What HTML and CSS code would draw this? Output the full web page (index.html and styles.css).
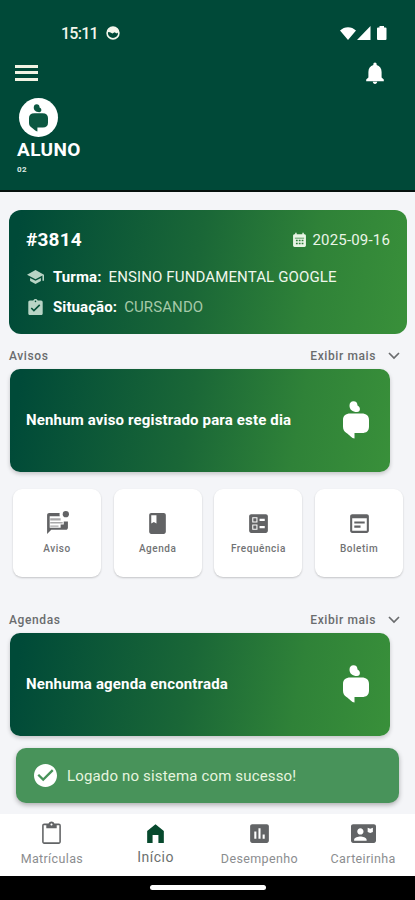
FILE: index.html
```html
<!DOCTYPE html>
<html lang="pt-BR">
<head>
<meta charset="utf-8">
<meta name="viewport" content="width=device-width, initial-scale=1">
<title>Aluno</title>
<link rel="stylesheet" href="styles.css">
</head>
<body>
<svg width="0" height="0" class="defs" aria-hidden="true">
  <symbol id="apple" viewBox="0 0 26 38">
    <path d="M10.500 .3c2.500 0 4 1.500 4 4.200 1.600.8 2.400 2 2.400 3.500 0 1.800-1 3-2.900 3-4.500 0-7.500-2.500-7.500-6.300C6.500 2 8 .3 10.500.3z"/>
    <path d="M7.500 12.500h11c5 0 7.500 2.300 7.500 6.500v6.500c0 4.500-2.500 6.500-7 6.500h-7.500v5.500C9 37.500 6.500 34 3.500 32 1 30.200 0 28.500 0 25.500V19c0-4.200 2.500-6.500 7.500-6.500z"/>
  </symbol>
  <symbol id="chevron" viewBox="0 0 12 8"><path d="M1 1l5 5 5-5" fill="none" stroke="currentColor" stroke-width="1.700"/></symbol>
</svg>
<div class="phone">
  <header class="header">
    <div class="status">
      <span class="time">15:11</span>
      <svg class="face" viewBox="0 0 14 14"><circle cx="7" cy="7" r="5.900" fill="none" stroke="currentColor" stroke-width="1.600"/><path d="M1.500 6C3-.5 11-.5 12.500 6L11 7.500 8.500 6.300 6.500 7.500 4 6.300z"/></svg>
      <svg class="signals" viewBox="0 0 47 15"><path d="M0 4.500C4.500 0 11.500 0 16 4.500L8 14zM30.500 0v14H17zM39.500 1.500V0h4.500v1.500h1.500q1 0 1 1V13q0 1-1 1h-7.500q-1 0-1-1V2.500q0-1 1-1z"/></svg>
    </div>
    <div class="toolbar">
      <div class="menu"><i></i><i></i><i></i></div>
      <svg class="bell" viewBox="4 2 16 20"><path d="M12 22c1.100 0 2-.9 2-2h-4c0 1.100.9 2 2 2zm6-6v-5c0-3.070-1.630-5.640-4.500-6.320V4c0-.83-.67-1.500-1.500-1.500s-1.500.67-1.500 1.500v.68C7.640 5.360 6 7.920 6 11v5l-2 2v1.500h16V18z"/></svg>
    </div>
    <div class="avatar"><svg><use href="#apple"/></svg></div>
    <h1 class="name">ALUNO</h1>
    <p class="code">02</p>
  </header>

  <main class="content">
    <section class="student">
      <div class="row top">
        <strong class="number">#3814</strong>
        <span class="date"><svg viewBox="3 1 18 21"><path fill-rule="evenodd" d="M19 4h-1V2h-2v2H8V2H6v2H5c-1.100 0-2 .9-2 2v14c0 1.100.9 2 2 2h14c1.100 0 2-.9 2-2V6c0-1.100-.9-2-2-2zM5.500 9h13v1h-13zM7 12h2.500v2H7zm4 0h2.500v2H11zm4 0h2.500v2H15zm-8 4h2.500v2H7zm4 0h2.500v2H11zm4 0h2.500v2H15z"/></svg><span>2025-09-16</span></span>
      </div>
      <div class="row detail">
        <svg viewBox="1 3 22 18"><path d="M5 13.180v4L12 21l7-3.820v-4L12 17l-7-3.820zM12 3L1 9l11 6 9-4.910V17h2V9L12 3z"/></svg>
        <b>Turma:</b><span class="class-name">ENSINO FUNDAMENTAL GOOGLE</span>
      </div>
      <div class="row detail">
        <svg viewBox="3 1 18 20"><path d="M19 3h-4.180C14.400 1.840 13.300 1 12 1s-2.400.84-2.820 2H5c-1.100 0-2 .9-2 2v14c0 1.100.9 2 2 2h14c1.100 0 2-.9 2-2V5c0-1.100-.9-2-2-2zm-7 0c.55 0 1 .45 1 1s-.45 1-1 1-1-.45-1-1 .45-1 1-1zm-2 14l-4-4 1.410-1.410L10 14.170l6.590-6.590L18 9l-8 8z"/></svg>
        <b>Situação:</b><span class="state">CURSANDO</span>
      </div>
    </section>

    <div class="section-head"><span>Avisos</span><span class="more"><span>Exibir mais</span><svg><use href="#chevron"/></svg></span></div>
    <section class="banner"><span>Nenhum aviso registrado para este dia</span><svg><use href="#apple"/></svg></section>

    <div class="tiles">
      <div class="tile"><svg viewBox="0 0 24 24"><path d="M22 6.980V16c0 1.100-.9 2-2 2H6l-4 4V4c0-1.100.9-2 2-2h10.100C13.800 3.500 14 4 14.200 5H4.500v11H15v-3h3v-3h4z"/><path d="M5 7h10v2H5zm0 3.500h12v1.500H5zM5 14h8v1H5z" opacity=".55"/><circle cx="20" cy="3" r="3"/></svg><span>Aviso</span></div>
      <div class="tile"><svg viewBox="0 0 24 24"><path d="M18 2H6c-1.100 0-2 .9-2 2v16c0 1.100.9 2 2 2h12c1.100 0 2-.9 2-2V4c0-1.100-.9-2-2-2zM6 4h5v8l-2.500-1.500L6 12V4z"/></svg><span>Agenda</span></div>
      <div class="tile"><svg viewBox="0 0 24 24"><path fill-rule="evenodd" d="M13 9.500h5v-2h-5v2zm0 7h5v-2h-5v2zm6 4.500H5c-1.100 0-2-.9-2-2V5c0-1.100.9-2 2-2h14c1.100 0 2 .9 2 2v14c0 1.100-.9 2-2 2zM6 11h5V6H6v5zm1-4h3v3H7V7zM6 18h5v-5H6v5zm1-4h3v3H7v-3z"/></svg><span>Frequência</span></div>
      <div class="tile"><svg viewBox="0 0 24 24"><path fill-rule="evenodd" d="M19 3H5c-1.110 0-2 .9-2 2v14c0 1.100.89 2 2 2h14c1.100 0 2-.9 2-2V5c0-1.100-.89-2-2-2zm0 16H5V7h14v12zm-2-7H7v-2h10v2zm-4 4H7v-2h6v2z"/></svg><span>Boletim</span></div>
    </div>

    <div class="section-head"><span>Agendas</span><span class="more"><span>Exibir mais</span><svg><use href="#chevron"/></svg></span></div>
    <section class="banner"><span>Nenhuma agenda encontrada</span><svg><use href="#apple"/></svg></section>

    <div class="toast"><svg viewBox="2 2 20 20"><path d="M12 2C6.480 2 2 6.480 2 12s4.480 10 10 10 10-4.480 10-10S17.520 2 12 2zm-2 15l-5-5 1.410-1.410L10 14.170l7.590-7.590L19 8l-9 9z"/></svg><span>Logado no sistema com sucesso!</span></div>
  </main>

  <nav class="nav">
    <a><svg viewBox="0 0 24 24"><path fill-rule="evenodd" d="M19 2.500h-4.180C14.400 1.340 13.300.5 12 .5s-2.400.84-2.820 2H5c-1.100 0-2 .9-2 2V20c0 1.100.9 2 2 2h14c1.100 0 2-.9 2-2V4.500c0-1.100-.9-2-2-2zm-7-.2c.55 0 1 .45 1 1s-.45 1-1 1-1-.45-1-1 .45-1 1-1zM19.500 20.500h-15V4H7v3h10V4h2.500z"/></svg><span>Matrículas</span></a>
    <a class="active"><svg viewBox="0 0 24 24"><path d="M4 21V9.500L12 3l8 6.500V21h-5.200v-7.500H9.200V21z"/></svg><span>Início</span></a>
    <a><svg viewBox="0 0 24 24"><path d="M19 3H5c-1.100 0-2 .9-2 2v14c0 1.100.9 2 2 2h14c1.100 0 2-.9 2-2V5c0-1.100-.9-2-2-2zM9 17H7v-7h2v7zm4 0h-2V7h2v10zm4 0h-2v-4h2v4z"/></svg><span>Desempenho</span></a>
    <a><svg class="wide" viewBox="0 3 24 18"><path fill-rule="evenodd" d="M22 3H2C.9 3 0 3.900 0 5v14c0 1.100.9 2 2 2h20c1.100 0 2-.9 2-2V5c0-1.100-.9-2-2-2zM9 7c1.660 0 3 1.340 3 3s-1.340 3-3 3-3-1.340-3-3 1.340-3 3-3zm6 12H3v-1c0-2 4-3.100 6-3.100s6 1.100 6 3.100v1zm1-12.500l2.500 1 2.500-1v4l-2.500 1-2.500-1z"/></svg><span>Carteirinha</span></a>
  </nav>
  <div class="system-bar"><i></i></div>
</div>
</body>
</html>
```
FILE: styles.css
```css
* { box-sizing: border-box; margin: 0; padding: 0; }
body { font-family: Roboto, sans-serif; background: #f4f5f8; white-space: nowrap; }
svg { fill: currentColor; flex: none; display: block; }
.defs { position: absolute; }
.phone { width: 415px; height: 900px; display: flex; flex-direction: column; overflow: hidden; }

.header { height: 192px; background: #004938; color: #fff; border-bottom: 2px solid #06110e; padding: 25px 17px 0; flex: none; }
.status { height: 16px; display: flex; align-items: center; padding-left: 44px; color: #f3f6ec; }
.time { font-size: 16px; font-weight: 500; letter-spacing: -.75px; }
.face { width: 14px; height: 14px; margin-left: 8px; }
.signals { width: 47px; height: 15px; margin-left: auto; margin-right: 11px; color: #fff; }
.toolbar { height: 21px; margin-top: 21px; display: flex; justify-content: space-between; align-items: center; }
.menu { width: 23px; margin-left: -2px; display: flex; flex-direction: column; gap: 3.500px; }
.menu i { height: 3px; background: #f1f3e3; }
.bell { width: 18px; height: 22px; margin-right: 14px; }
.avatar { width: 39px; height: 39px; margin: 15px 0 0 2px; border-radius: 50%; background: #fff; color: #0b5741; display: flex; align-items: center; justify-content: center; }
.avatar svg { width: 19px; height: 28px; }
.name { font-size: 19px; line-height: 22px; margin-top: 2px; letter-spacing: .4px; }
.code { font-size: 8px; line-height: 10px; margin-top: 4px; font-weight: 700; color: #dfe9e4; letter-spacing: .4px; }

.content { flex: 1; padding: 18px 9px 0; display: flex; flex-direction: column; min-height: 0; }
.student, .banner { background: linear-gradient(100deg, #004a38 3%, #1a6737 47%, #2f8238 75%, #39903a 100%); color: #fff; flex: none; }
.student { height: 124px; width: 398px; border-radius: 12px; padding: 16px 17px 0; }
.row { display: flex; align-items: center; }
.top { height: 27px; justify-content: space-between; }
.number { font-size: 19px; letter-spacing: .2px; }
.date { display: flex; align-items: center; gap: 6px; font-size: 15px; letter-spacing: .18px; color: #eaf5e6; }
.date svg { width: 13px; height: 15px; }
.detail { height: 30px; font-size: 15px; }
.detail:nth-child(2) { margin-top: 9px; }
.detail svg { width: 17px; height: 16px; margin: 0 9px 0 1px; color: #b8d4c5; }
.detail b { letter-spacing: .1px; }
.class-name { margin-left: 7px; color: #f0f7ec; letter-spacing: .13px; }
.state { margin-left: 7px; color: #a5c9a8; letter-spacing: .1px; }

.section-head { height: 35px; padding: 9px 6px 0 0; display: flex; justify-content: space-between; align-items: center; font-size: 12px; font-weight: 500; letter-spacing: .6px; color: #6a6c6e; flex: none; }
.more { display: flex; align-items: center; gap: 12px; }
.more svg { width: 12px; height: 8px; }
.banner { width: 380px; height: 103px; margin-left: 1px; border-radius: 10px; display: flex; align-items: center; justify-content: space-between; padding: 0 21px 1px 16px; font-size: 15px; font-weight: 700; letter-spacing: .16px; box-shadow: 0 2px 4px rgba(0,0,0,.2); }
.banner svg { width: 26px; height: 38px; }
.tiles { display: grid; grid-template-columns: repeat(4, 88px); gap: 12.700px; margin: 17px 0 21px 4px; flex: none; }
.tile { height: 88px; border-radius: 9px; background: #fff; box-shadow: 0 1px 2px rgba(0,0,0,.2); display: flex; flex-direction: column; align-items: center; padding-top: 22px; color: #626365; font-size: 10px; font-weight: 500; letter-spacing: .55px; }
.tile svg { width: 25px; height: 25px; }
.tile span { margin-top: 6px; line-height: 13px; color: #727375; }
.toast { width: 383px; height: 55px; margin: 12px 0 0 7px; border-radius: 10px; background: #48935a; color: #e6f5df; display: flex; align-items: center; gap: 10px; padding-left: 18px; font-size: 15px; letter-spacing: .16px; box-shadow: 0 2px 5px rgba(0,0,0,.3); flex: none; }
.toast svg { width: 23px; height: 23px; color: #fff; }

.nav { height: 62px; background: #fff; display: grid; grid-template-columns: repeat(4, 1fr); flex: none; color: #626466; }
.nav a { display: flex; flex-direction: column; align-items: center; padding-top: 7px; font-size: 12.500px; }
.nav svg { width: 25px; height: 25px; }
.nav svg.wide { height: 19px; margin: 3px 0; }
.nav span { margin-top: 5px; line-height: 16px; color: #8b8d8f; letter-spacing: .36px; }
.nav .active { font-size: 14px; }
.nav .active svg { color: #07492d; }
.nav .active span { margin-top: 3px; color: #6c716f; letter-spacing: .5px; }
.system-bar { height: 24px; background: #000; display: flex; justify-content: center; padding-top: 9px; flex: none; }
.system-bar i { width: 116px; height: 5px; background: #fff; border-radius: 3px; }
```
